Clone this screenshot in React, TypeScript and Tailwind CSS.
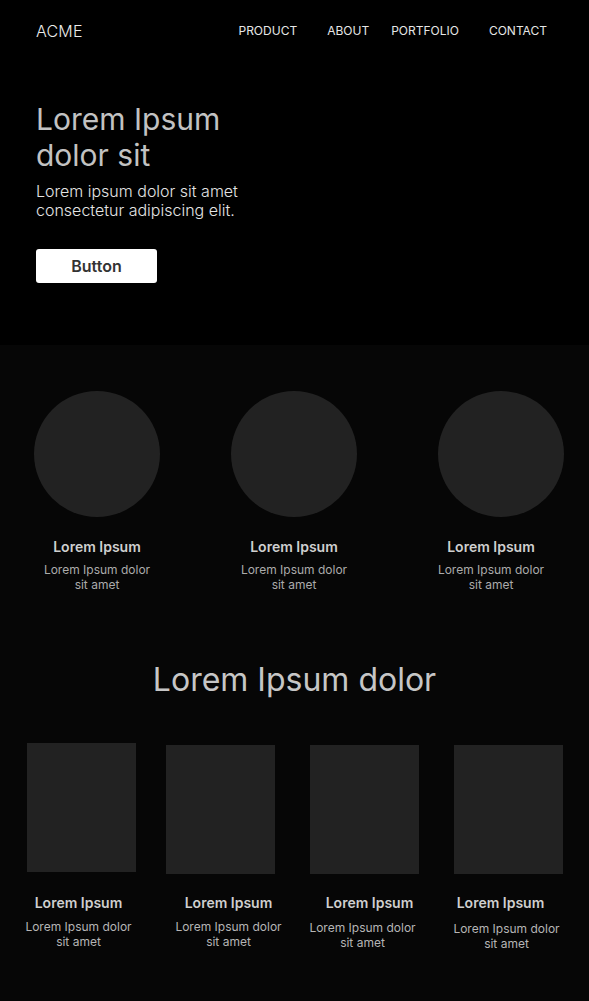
import React from 'react';

const features = [
  { ml: 'ml-[34px]', text: '' },
  { ml: 'ml-[71px]', text: '' },
  { ml: 'ml-[81px]', text: 'pr-[20px]' },
];

const cards = [
  { ml: 'ml-[27px]', mt: 'mt-0', titleMt: 'mt-[21px]', title: '-translate-x-[3px]', desc: '-translate-x-[3px]', descMt: 'mt-[6px]' },
  { ml: 'ml-[30px]', mt: 'mt-[2px]', titleMt: 'mt-[19px]', title: 'translate-x-[8px]', desc: 'translate-x-[8px]', descMt: 'mt-[6px]' },
  { ml: 'ml-[35px]', mt: 'mt-[2px]', titleMt: 'mt-[19px]', title: 'translate-x-[5px]', desc: '-translate-x-[2px]', descMt: 'mt-[7px]' },
  { ml: 'ml-[35px]', mt: 'mt-[2px]', titleMt: 'mt-[19px]', title: '-translate-x-[8px]', desc: '-translate-x-[2px]', descMt: 'mt-[8px]' },
];

const App: React.FC = () => {
  return (
    <div className="w-[589px] min-h-[1001px] bg-[#060606] font-['Inter',sans-serif] overflow-hidden">
      <section className="bg-black h-[345px] px-[36px]">
        <header className="flex items-center h-[61px]">
          <span className="text-[16px] font-light text-[#ececec] tracking-[0.2px]">ACME</span>
          <nav className="ml-auto flex items-center text-[12px] text-[#e6e6e6] mr-[6px]">
            <a className="mr-[30px]">PRODUCT</a>
            <a className="mr-[22px]">ABOUT</a>
            <a className="mr-[30px]">PORTFOLIO</a>
            <a>CONTACT</a>
          </nav>
        </header>
        <div className="pt-[40px]">
          <h1 className="text-[30px] leading-[36px] font-normal text-[#c2c2c2]">
            Lorem Ipsum
            <br />
            dolor sit
          </h1>
          <p className="mt-[9px] text-[16px] leading-[19px] font-light text-[#e4e4e4]">
            Lorem ipsum dolor sit amet
            <br />
            consectetur adipiscing elit.
          </p>
          <button className="mt-[29px] w-[121px] h-[34px] bg-white rounded-[3px] text-[16px] font-semibold text-[#333]">
            Button
          </button>
        </div>
      </section>

      <section className="pt-[46px] flex">
        {features.map((f, i) => (
          <div key={i} className={`${f.ml} w-[126px] flex flex-col items-center`}>
            <div className="w-[126px] h-[126px] rounded-full bg-[#222]" />
            <div className={`w-[126px] flex flex-col items-center ${f.text}`}>
              <h3 className="mt-[20px] text-[14px] leading-[20px] font-semibold text-[#cfcfcf]">Lorem Ipsum</h3>
              <p className="mt-[5px] text-[12px] leading-[15px] text-[#ababab] text-center whitespace-nowrap">
                Lorem Ipsum dolor
                <br />
                sit amet
              </p>
            </div>
          </div>
        ))}
      </section>

      <h2 className="mt-[68px] text-center text-[32px] leading-[40px] text-[#c6c6c6] font-normal">
        Lorem Ipsum dolor
      </h2>

      <section className="mt-[43px] flex items-start pb-[40px]">
        {cards.map((c, i) => (
          <div key={i} className={`${c.ml} w-[109px] flex flex-col items-center`}>
            <div className={`${c.mt} w-[109px] h-[129px] bg-[#222]`} />
            <h3 className={`${c.titleMt} text-[14px] leading-[20px] font-semibold text-[#cfcfcf] whitespace-nowrap ${c.title}`}>
              Lorem Ipsum
            </h3>
            <p className={`${c.descMt} text-[12px] leading-[15px] text-[#b5b5b5] text-center whitespace-nowrap ${c.desc}`}>
              Lorem Ipsum dolor
              <br />
              sit amet
            </p>
          </div>
        ))}
      </section>
    </div>
  );
};

export default App;
